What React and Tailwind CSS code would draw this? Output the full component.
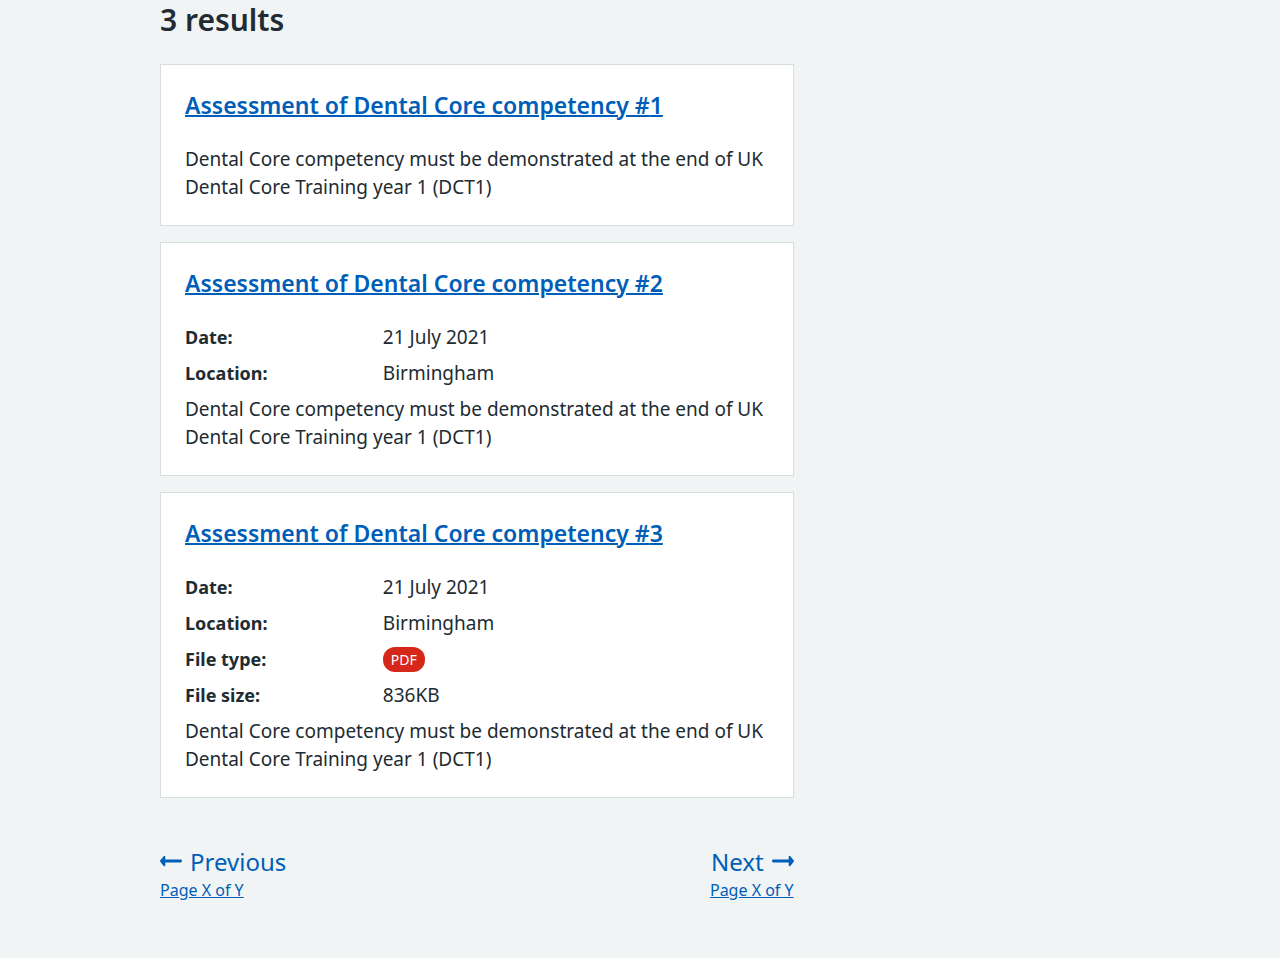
const results = [
  { id: 1, rows: [] },
  { id: 2, rows: [["Date:", "21 July 2021"], ["Location:", "Birmingham"]] },
  {
    id: 3,
    rows: [
      ["Date:", "21 July 2021"],
      ["Location:", "Birmingham"],
      ["File type:", "PDF"],
      ["File size:", "836KB"],
    ],
  },
];

function Card({ id, rows }) {
  return (
    <li className="border border-[#d8dde0] bg-white p-6">
      <h3 className="mb-6 text-[23px] leading-8 font-semibold">
        <a href="#result" className="text-[#005eb8] underline decoration-2">Assessment of Dental Core competency #{id}</a>
      </h3>
      {rows.length > 0 && (
        <dl>
          {rows.map(([label, value]) => (
            <div key={label} className="mb-2 grid grid-cols-3 gap-x-2.5">
              <dt className="text-[18px] leading-7 font-bold">{label}</dt>
              <dd className="flex items-center">
                {value === "PDF" ? (
                  <span className="rounded-xl bg-[#d5281b] px-2 text-[14px] leading-[25px] text-white">PDF</span>
                ) : (
                  value
                )}
              </dd>
            </div>
          ))}
        </dl>
      )}
      <p>Dental Core competency must be demonstrated at the end of UK Dental Core Training year 1 (DCT1)</p>
    </li>
  );
}

function Arrow({ flip }) {
  return (
    <svg viewBox="0 0 22 12" className={flip ? "h-3 w-[22px] -scale-x-100" : "h-3 w-[22px]"} fill="currentColor" aria-hidden="true">
      <path d="M3.7.2C4.4-.4 5.300 0 5.300.9V3.600H20.600a1.400 1.400 0 0 1 0 2.800H5.300V9.300C5.300 10.200 4.400 10.600 3.700 10L.3 5.800Q-.3 5 .3 4.200z" />
    </svg>
  );
}

export default function App() {
  return (
    <div className="min-h-screen bg-[#f0f4f5] px-8 font-['Noto_Sans',sans-serif] text-[19px] leading-7 text-[#212b32]">
      <main className="mx-auto max-w-[960px]">
        <div className="w-full md:w-[66%]">
          <h2 className="mb-6 text-[30px] leading-10 font-semibold">3 results</h2>
          <ul className="flex flex-col gap-4">
            {results.map((r) => <Card key={r.id} {...r} />)}
          </ul>
          <nav aria-label="Pagination" className="mt-12 flex justify-between pb-12 text-[#005eb8]">
            <a href="#previous" className="flex flex-col">
              <span className="flex items-center gap-2 text-[24px] leading-8"><Arrow />Previous</span>
              <span className="text-[16px] leading-6 underline">Page X of Y</span>
            </a>
            <a href="#next" className="flex flex-col items-end">
              <span className="flex items-center gap-2 text-[24px] leading-8">Next<Arrow flip /></span>
              <span className="text-[16px] leading-6 underline">Page X of Y</span>
            </a>
          </nav>
        </div>
      </main>
    </div>
  );
}
